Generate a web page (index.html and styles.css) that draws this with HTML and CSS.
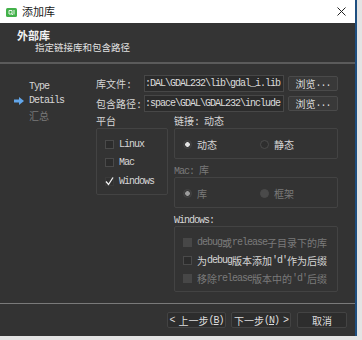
FILE: index.html
```html
<!DOCTYPE html>
<html>
<head>
<meta charset="utf-8">
<link rel="stylesheet" href="styles.css">
</head>
<body>
<div class="win">
  <div class="titlebar">
    <svg class="appicon" viewBox="0 0 11 9"><rect x="0" y="0" width="11" height="9" rx="1.5" fill="#43b14a"/><path d="M3 2.5h3v3.5h-3z" fill="none" stroke="#e8f6e8" stroke-width="1"/><path d="M5.5 5.5l1.5 1.5M8 2v4.5" stroke="#e8f6e8" stroke-width="1"/></svg>
    <span class="title">添加库</span>
    <svg class="close" viewBox="0 0 9 9"><path d="M0.5 0.5L8.5 8.5M8.5 0.5L0.5 8.5" stroke="#222" stroke-width="1"/></svg>
  </div>
  <div class="header">
    <div class="h-title">外部库</div>
    <div class="h-sub">指定链接库和包含路径</div>
  </div>
  <div class="main">
    <div class="nav">
      <div class="nav-item"><span class="nav-mark"></span><span class="m">Type</span></div>
      <div class="nav-item"><span class="nav-mark"><svg class="arrow" viewBox="0 0 10 8"><path d="M0 2.5H5V0L10 4L5 8V5.5H0Z" fill="#62a6ea"/></svg></span><span class="m">Details</span></div>
      <div class="nav-item dim"><span class="nav-mark"></span>汇总</div>
    </div>
    <div class="form">
      <div class="row">
        <span class="label">库文件<span class="m">:</span></span>
        <div class="field"><span class="m">:DAL\GDAL232\lib\gdal_i.lib</span></div>
        <div class="btn browse">浏览<span class="m">...</span></div>
      </div>
      <div class="row">
        <span class="label">包含路径<span class="m">:</span></span>
        <div class="field"><span class="m">:space\GDAL\GDAL232\include</span></div>
        <div class="btn browse">浏览<span class="m">...</span></div>
      </div>
      <div class="cols">
        <div class="col-left">
          <div class="glabel">平台</div>
          <div class="gbox plat">
            <div class="opt tall"><span class="cb"></span><span class="m">Linux</span></div>
            <div class="opt tall"><span class="cb"></span><span class="m">Mac</span></div>
            <div class="opt tall"><span class="cb checked"><svg class="tick" viewBox="0 0 9 9"><path d="M1 4.5L3.5 7.5L8 0.5" fill="none" stroke="#f2f2f2" stroke-width="1.3"/></svg></span><span class="m">Windows</span></div>
          </div>
        </div>
        <div class="col-right">
          <div class="glabel">链接<span class="m">: </span>动态</div>
          <div class="gbox box1">
            <div class="opt"><span class="ropt"><span class="rd on"></span>动态</span><span class="ropt"><span class="rd"></span>静态</span></div>
          </div>
          <div class="glabel dim gap"><span class="m">Mac: </span>库</div>
          <div class="gbox box1">
            <div class="opt dim"><span class="ropt"><span class="rd dis-on"></span>库</span><span class="ropt"><span class="rd dis"></span>框架</span></div>
          </div>
          <div class="glabel gap"><span class="m">Windows:</span></div>
          <div class="gbox box3">
            <div class="opt dim"><span class="cb dis"></span><span class="m">debug</span>或<span class="m">release</span>子目录下的库</div>
            <div class="opt"><span class="cb"></span>为<span class="m">debug</span>版本添加<span class="m">'d'</span>作为后缀</div>
            <div class="opt dim"><span class="cb dis"></span>移除<span class="m">release</span>版本中的<span class="m">'d'</span>后缀</div>
          </div>
        </div>
      </div>
    </div>
  </div>
  <div class="footer">
    <div class="btn fbtn prev"><span class="m chev-l">&lt;</span>上一步<span class="m">(<u>B</u>)</span></div>
    <div class="btn fbtn next">下一步<span class="m">(<u>N</u>)</span><span class="m chev-r">&gt;</span></div>
    <div class="btn fbtn cancel">取消</div>
  </div>
</div>
</body>
</html>
```

FILE: styles.css
```css
* { box-sizing: border-box; }
html, body { margin: 0; padding: 0; }
body {
  width: 362px;
  height: 340px;
  overflow: hidden;
  background: #e4e4e4;
  font-family: "Noto Sans CJK SC", sans-serif;
  font-size: 10px;
  color: #d6d6d6;
}
.win {
  width: 357px;
  height: 336px;
  background: #333333;
  border-right: 2px solid #1e4f80;
  display: flex;
  flex-direction: column;
}
.titlebar {
  height: 23px;
  flex: none;
  background: #ffffff;
  display: flex;
  align-items: center;
  padding-left: 6px;
  color: #1a1a1a;
}
.appicon { width: 11px; height: 9px; margin-right: 5px; margin-top: 2px; }
.title { font-size: 11px; line-height: 23px; }
.close { width: 9px; height: 9px; margin-left: auto; margin-right: 9px; }
.header {
  height: 41px;
  flex: none;
  background: #343434;
  border-bottom: 2px solid #5b5b5b;
  padding: 6px 0 0 17px;
}
.h-title { font-size: 11px; font-weight: bold; line-height: 12px; color: #f2f2f2; }
.h-sub { font-size: 9.5px; line-height: 12px; padding-left: 18px; color: #e2e2e2; }
.main { flex: 1; display: flex; min-height: 0; }
.nav { width: 96px; flex: none; padding: 15px 0 0 14px; }
.nav-item { display: flex; align-items: center; height: 14.5px; white-space: nowrap; }
.nav-mark { width: 15px; flex: none; display: flex; align-items: center; }
.arrow { width: 10px; height: 8px; }
.dim { color: #7a7a7a; }
.m {
  font-family: "Liberation Mono", monospace;
  font-size: 10px;
  letter-spacing: -1px;
}
.form { width: 242px; padding-top: 11px; display: flex; flex-direction: column; }
.row { display: flex; align-items: center; height: 17px; }
.row + .row { margin-top: 3px; }
.label { width: 48px; flex: none; white-space: nowrap; }
.field {
  width: 140px;
  height: 17px;
  flex: none;
  background: #2b2b2b;
  border: 1px solid #474747;
  display: flex;
  align-items: center;
  justify-content: flex-end;
  overflow: hidden;
  white-space: nowrap;
  padding-right: 3px;
  color: #dcdcdc;
}
.btn {
  background: #393939;
  border: 1px solid #4a4a4a;
  border-radius: 2px;
  display: flex;
  align-items: center;
  justify-content: center;
  color: #dedede;
  white-space: nowrap;
}
.browse { margin-left: 4px; width: 50px; height: 15px; }
.cols { display: flex; gap: 6px; margin-top: 2px; }
.col-left { width: 72px; flex: none; }
.col-right { width: 164px; flex: none; }
.glabel { height: 14px; line-height: 14px; white-space: nowrap; }
.glabel.gap { margin-top: 4px; }
.gbox {
  border: 1px solid #434343;
  border-radius: 2px;
  padding: 6px 0 0 8px;
}
.plat { height: 67px; }
.box1 { height: 31px; }
.box3 { height: 66px; }
.opt { display: flex; align-items: center; height: 18px; white-space: nowrap; }
.opt.tall { height: 18.5px; }
.cb {
  width: 9px;
  height: 9px;
  flex: none;
  border: 1px solid #4a4a4a;
  background: #2c2c2c;
  margin-right: 5px;
  display: flex;
  align-items: center;
  justify-content: center;
}
.cb.checked { border-color: #3a3a3a; background: #303030; }
.cb.dis { background: #474747; border-color: #474747; }
.tick { width: 9px; height: 9px; flex: none; }
.ropt { display: flex; align-items: center; }
.ropt:first-child { width: 77px; }
.rd {
  width: 9px;
  height: 9px;
  flex: none;
  border-radius: 50%;
  border: 1px solid #4c4c4c;
  background: #2e2e2e;
  margin-right: 5px;
}
.rd.on { background: radial-gradient(circle, #e2e2e2 0 2px, #3a3a3a 2.6px); border-color: #444; }
.rd.dis-on { background: radial-gradient(circle, #9c9c9c 0 2px, #3a3a3a 2.6px); border-color: #444; }
.rd.dis { background: #4a4a4a; border-color: #4a4a4a; }
.footer {
  height: 33px;
  flex: none;
  border-top: 1px solid #7a7a7a;
  display: flex;
  align-items: center;
  justify-content: flex-end;
  padding-right: 8px;
  gap: 5px;
}
.fbtn { height: 16px; background: #2d2d2d; border-color: #434343; }
.chev-l { margin-right: 4px; }
.chev-r { margin-left: 4px; }
.prev { width: 59px; }
.next { width: 60px; }
.cancel { width: 50px; margin-left: 1px; }
```
